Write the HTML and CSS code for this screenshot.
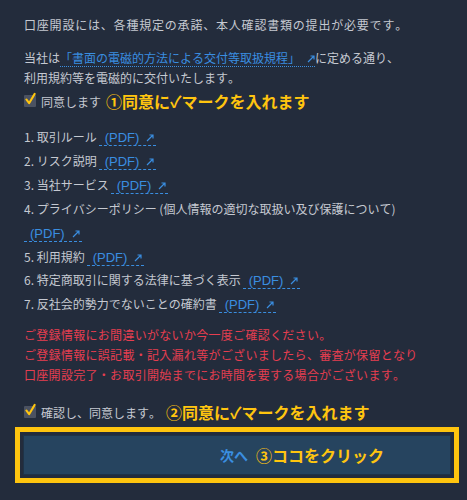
FILE: index.html
```html
<!DOCTYPE html>
<html lang="ja">
<head>
<meta charset="utf-8">
<link rel="stylesheet" href="styles.css">
</head>
<body>
<main class="page">
  <p class="intro">口座開設には、各種規定の承諾、本人確認書類の提出が必要です。</p>
  <p class="notice">当社は<a class="link">「書面の電磁的方法による交付等取扱規程」<svg class="ext" viewBox="0 0 8 8"><path d="M1 7L7 1M3.5 1H7V4.5" fill="none" stroke="currentColor" stroke-width="1.2"/></svg></a>に定める通り、<br>利用規約等を電磁的に交付いたします。</p>
  <div class="check">
    <span class="box"><svg viewBox="0 0 14 14"><path d="M2.5 7.5L5.5 11.5L11.5 1.5" fill="none" stroke="#ffc50f" stroke-width="2.2" stroke-linecap="round" stroke-linejoin="round"/></svg></span>
    <span class="label">同意します</span>
    <span class="note">①同意に✓マークを入れます</span>
  </div>
  <ol class="docs">
    <li>1. 取引ルール<a class="pdf">(PDF)<svg class="ext" viewBox="0 0 8 8"><path d="M1 7L7 1M3.5 1H7V4.5" fill="none" stroke="currentColor" stroke-width="1.2"/></svg></a></li>
    <li>2. リスク説明<a class="pdf">(PDF)<svg class="ext" viewBox="0 0 8 8"><path d="M1 7L7 1M3.5 1H7V4.5" fill="none" stroke="currentColor" stroke-width="1.2"/></svg></a></li>
    <li>3. 当社サービス<a class="pdf">(PDF)<svg class="ext" viewBox="0 0 8 8"><path d="M1 7L7 1M3.5 1H7V4.5" fill="none" stroke="currentColor" stroke-width="1.2"/></svg></a></li>
    <li>4. プライバシーポリシー (個人情報の適切な取扱い及び保護について)<br><a class="pdf first">(PDF)<svg class="ext" viewBox="0 0 8 8"><path d="M1 7L7 1M3.5 1H7V4.5" fill="none" stroke="currentColor" stroke-width="1.2"/></svg></a></li>
    <li>5. 利用規約<a class="pdf">(PDF)<svg class="ext" viewBox="0 0 8 8"><path d="M1 7L7 1M3.5 1H7V4.5" fill="none" stroke="currentColor" stroke-width="1.2"/></svg></a></li>
    <li>6. 特定商取引に関する法律に基づく表示<a class="pdf">(PDF)<svg class="ext" viewBox="0 0 8 8"><path d="M1 7L7 1M3.5 1H7V4.5" fill="none" stroke="currentColor" stroke-width="1.2"/></svg></a></li>
    <li>7. 反社会的勢力でないことの確約書<a class="pdf">(PDF)<svg class="ext" viewBox="0 0 8 8"><path d="M1 7L7 1M3.5 1H7V4.5" fill="none" stroke="currentColor" stroke-width="1.2"/></svg></a></li>
  </ol>
  <p class="warn">ご登録情報にお間違いがないか今一度ご確認ください。<br>ご登録情報に誤記載・記入漏れ等がございましたら、審査が保留となり<br>口座開設完了・お取引開始までにお時間を要する場合がございます。</p>
  <div class="check check2">
    <span class="box"><svg viewBox="0 0 14 14"><path d="M2.5 7.5L5.5 11.5L11.5 1.5" fill="none" stroke="#ffc50f" stroke-width="2.2" stroke-linecap="round" stroke-linejoin="round"/></svg></span>
    <span class="label">確認し、同意します。</span>
    <span class="note">②同意に✓マークを入れます</span>
  </div>
  <div class="callout">
    <button class="next"><span class="next-label">次へ</span><span class="note">③ココをクリック</span></button>
  </div>
</main>
</body>
</html>
```

FILE: styles.css
```css
html, body {
  margin: 0;
  padding: 0;
  background: #232c3c;
}
body {
  font-family: "Noto Sans CJK JP", "Noto Sans", sans-serif;
  font-size: 12px;
  color: #c5c9d1;
  width: 467px;
  height: 500px;
  overflow: hidden;
  text-spacing-trim: space-all;
  font-kerning: none;
}
.page {
  padding: 15px 8px 0 24px;
}
p { margin: 0; }
.intro {
  line-height: 20px;
  letter-spacing: 0.8px;
}
.notice {
  margin-top: 13px;
  line-height: 20px;
}
.link, .pdf {
  color: #3a8ee0;
  border-bottom: 1px dashed #3a8ee0;
  text-decoration: none;
}
.link {
  border-bottom-style: dotted;
}
.ext {
  width: 8px;
  height: 8px;
  margin-left: 7px;
  vertical-align: 0;
}
.check {
  display: flex;
  align-items: center;
  margin-top: 2px;
  height: 22px;
}
.box {
  width: 12px;
  height: 12px;
  background: #4b5261;
  border-radius: 1px;
  position: relative;
  margin-right: 5px;
}
.box svg {
  position: absolute;
  left: 0;
  top: -3px;
  width: 13px;
  height: 14px;
}
.label {
  margin-right: 5px;
}
.note {
  color: #ffc50f;
  font-weight: bold;
  font-size: 16px;
}
.docs {
  list-style: none;
  margin: 13px 0 0;
  padding: 0;
}
.docs li {
  line-height: 23.9px;
}
.pdf {
  font-family: "Liberation Sans", "Noto Sans", sans-serif;
  font-size: 13px;
  line-height: 1;
  margin-left: 2px;
  padding: 0 2px 0 6px;
}
.pdf.first {
  margin-left: 0;
}
.warn {
  margin-top: 9px;
  color: #e63e50;
  line-height: 20px;
  letter-spacing: 0.3px;
}
.check2 {
  margin-top: 16px;
}
.callout {
  margin: 4px 0 0 -9px;
  width: 428px;
  border: 5px solid #ffc50f;
  padding: 3px;
}
.next {
  display: flex;
  justify-content: center;
  align-items: center;
  gap: 8px;
  width: 100%;
  height: 40px;
  background: #26445f;
  border: 1px solid #1f3347;
  font-family: inherit;
  padding: 0 0 0 130px;
  margin: 0;
}
.next-label {
  color: #3a8ee0;
  font-weight: bold;
  font-size: 14px;
}
```
